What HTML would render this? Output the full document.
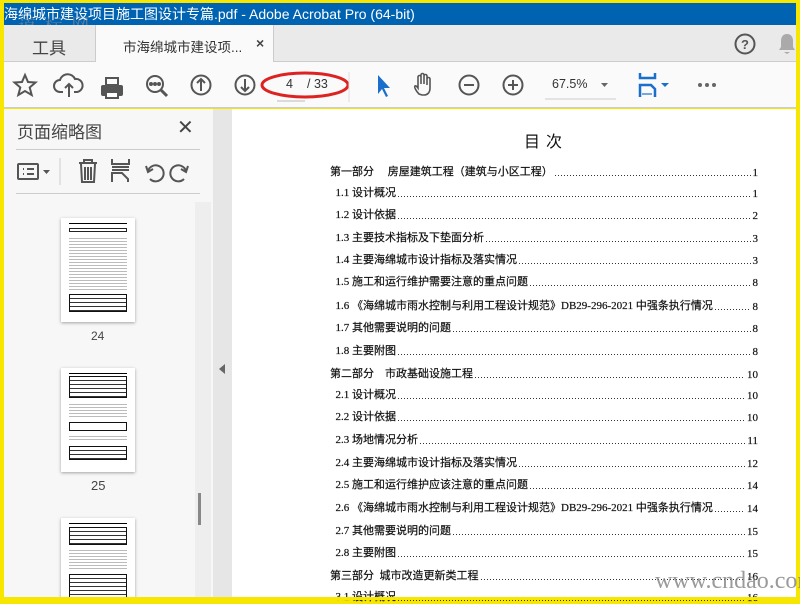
<!DOCTYPE html>
<html><head><meta charset="utf-8"><style>
*{margin:0;padding:0;box-sizing:border-box}
body{width:800px;height:600px;overflow:hidden;background:#f7e600;position:relative;font-family:"Liberation Sans","Noto Sans CJK SC",sans-serif}
.a{position:absolute}
.title{left:4px;top:3px;width:792px;height:22px;background:#0063b1;color:#fff;font-size:14px;line-height:22px;white-space:nowrap;overflow:hidden;padding-left:0}
.tabs{left:4px;top:25px;width:792px;height:37px;background:#eaeaea;border-bottom:1px solid #ccc}
.tb{left:4px;top:62px;width:792px;height:46px;background:#fafafa;border-bottom:1px solid #ccc}
.side{left:4px;top:109px;width:209px;height:488px;background:#f7f7f7;overflow:hidden}
.strip{left:213px;top:109px;width:19px;height:488px;background:#e6e6e6}
.pg{left:232px;top:109px;width:564px;height:488px;background:#fff}
.toc{font-family:"Liberation Serif","Noto Sans CJK SC",sans-serif;font-size:11px;color:#111;-webkit-text-stroke:0.2px #111}
.row{position:absolute;left:0;width:428px;height:15px;display:flex;align-items:flex-end;white-space:nowrap}
.row .d{flex:1;height:1px;background:repeating-linear-gradient(90deg,#333 0 1px,transparent 1px 3px);margin:0 2px 3px 2px}
.thumb{position:absolute;left:57px;width:74px;height:104px;background:#fff;box-shadow:0 1px 3px rgba(0,0,0,.35)}
.ln{position:absolute;height:1px;background:#555}
</style></head><body>
<div class="a title">海绵城市建设项目施工图设计专篇.pdf - Adobe Acrobat Pro (64-bit)</div>
<div class="a" style="left:18px;top:12px;color:rgba(150,150,150,.6);font-size:18px;font-family:'Noto Serif CJK SC',serif;letter-spacing:2px">道 标 网</div>
<div class="a tabs"></div>
<div class="a" style="left:32px;top:34px;font-size:17px;color:#444">工具</div>
<div class="a" style="left:95px;top:25px;width:179px;height:38px;background:#fafafa;border-left:1px solid #ccc;border-right:1px solid #ccc"></div>
<div class="a" style="left:123px;top:36px;font-size:13.5px;color:#333">市海绵城市建设项...</div>
<div class="a" style="left:256px;top:35px;font-size:14px;color:#444;font-weight:bold">×</div>
<svg class="a" style="left:734px;top:33px" width="22" height="22"><circle cx="11" cy="11" r="9.5" fill="none" stroke="#555" stroke-width="2"/><text x="11" y="16" font-size="13" font-weight="bold" text-anchor="middle" fill="#555" font-family="Liberation Sans">?</text></svg>
<svg class="a" style="left:777px;top:32px" width="20" height="24"><path d="M10 2c-4 0-6 3-6 7v6l-2 3h16l-2-3v-6c0-4-2-7-6-7z M7 20h6l-3 2z" fill="#aaa"/></svg>
<div class="a tb"></div>
<svg class="a" style="left:0;top:62px" width="800" height="46" fill="none" stroke="#555" stroke-width="2">
<path d="M25 13l3 7 7.5.5-5.8 5 2 7.5-6.7-4-6.7 4 2-7.5-5.8-5 7.5-.5z"/>
<path d="M63 30h-3a6 6 0 0 1 0-12 8 8 0 0 1 15-1 6 6 0 0 1 2 13h-3M69 35V22m-4 4l4-4 4 4"/>
<rect x="102" y="24" width="20" height="9" rx="1" fill="#555"/><rect x="106" y="16" width="12" height="7" fill="none"/><rect x="106" y="30" width="12" height="6" fill="#fff"/>
<circle cx="155" cy="22" r="8"/><path d="M161 28l6 6" stroke-width="3"/><circle cx="151" cy="22" r="1" fill="#555"/><circle cx="155" cy="22" r="1" fill="#555"/><circle cx="159" cy="22" r="1" fill="#555"/>
<circle cx="201" cy="23" r="9.5"/><path d="M201 29V17m-4 4l4-4 4 4"/>
<circle cx="245" cy="23" r="9.5"/><path d="M245 17v12m-4-4l4 4 4-4"/>
<ellipse cx="305" cy="23" rx="43" ry="12" stroke="#d22" stroke-width="3"/>
<path d="M378 13v19l4-5 4 8 2-1-4-8h6z" fill="#1a6fcc" stroke="none"/>
<path d="M419 32c-3-3-5-7-4-8s3 2 3 2V15a1.5 1.5 0 0 1 3 0v7V13a1.5 1.5 0 0 1 3 0v9V14a1.5 1.5 0 0 1 3 0v9v-6a1.5 1.5 0 0 1 3 0v9c0 5-3 7-6 7h-2z" stroke-width="1.6"/>
<circle cx="469" cy="23" r="9.5"/><path d="M464 23h10"/>
<circle cx="513" cy="23" r="9.5"/><path d="M508 23h10M513 18v10"/>
<path d="M545 37h71" stroke="#ccc" stroke-width="1"/>
<path d="M601 21h7l-3.5 4z" fill="#666" stroke="none"/>
<path d="M640 11v5h15v-5M640 35V23h11l4 4v8" stroke="#1a6fcc" stroke-width="2.5"/><path d="M642 32h10" stroke="#1a6fcc" stroke-width="1.2"/>
<path d="M661 21h8l-4 4z" fill="#1a6fcc" stroke="none"/>
<circle cx="700" cy="23" r="2" fill="#666" stroke="none"/><circle cx="707" cy="23" r="2" fill="#666" stroke="none"/><circle cx="714" cy="23" r="2" fill="#666" stroke="none"/>
<path d="M349 10v30" stroke="#ddd" stroke-width="1"/>
<path d="M277 39h28" stroke="#bbb" stroke-width="1"/>
</svg>
<div class="a" style="left:286px;top:77px;font-size:12.5px;color:#333">4</div>
<div class="a" style="left:307px;top:77px;font-size:12.5px;color:#333">/ 33</div>
<div class="a" style="left:552px;top:77px;font-size:12.5px;color:#333">67.5%</div>
<div class="a side">
<div class="thumb" style="top:109px"><div class="ln" style="left:8px;top:5px;width:58px;background:#000"></div><div class="ln" style="left:8px;top:10px;width:58px;height:4px;background:none;border:1px solid #222"></div>
<div style="position:absolute;left:8px;top:18px;width:58px;height:55px;background:repeating-linear-gradient(#fff 0 2px,#bbb 2px 3px)"></div>
<div style="position:absolute;left:8px;top:76px;width:58px;height:18px;border:1px solid #111;background:repeating-linear-gradient(#fff 0 3px,#333 3px 4px)"></div></div>
<div class="thumb" style="top:259px"><div class="ln" style="left:8px;top:5px;width:58px;background:#000"></div>
<div style="position:absolute;left:8px;top:8px;width:58px;height:22px;border:1px solid #111;background:repeating-linear-gradient(#fff 0 3px,#333 3px 4px)"></div>
<div style="position:absolute;left:8px;top:34px;width:58px;height:16px;background:repeating-linear-gradient(#fff 0 2px,#bbb 2px 3px)"></div>
<div style="position:absolute;left:8px;top:54px;width:58px;height:9px;border:1px solid #111"></div>
<div style="position:absolute;left:8px;top:66px;width:58px;height:8px;background:repeating-linear-gradient(#fff 0 2px,#bbb 2px 3px)"></div>
<div style="position:absolute;left:8px;top:78px;width:58px;height:14px;border:1px solid #111;background:repeating-linear-gradient(#fff 0 3px,#333 3px 4px)"></div></div>
<div class="thumb" style="top:409px"><div class="ln" style="left:8px;top:5px;width:58px;background:#000"></div>
<div style="position:absolute;left:8px;top:9px;width:58px;height:18px;border:1px solid #111;background:repeating-linear-gradient(#fff 0 3px,#333 3px 4px)"></div>
<div style="position:absolute;left:8px;top:30px;width:58px;height:22px;background:repeating-linear-gradient(#fff 0 2px,#bbb 2px 3px)"></div>
<div style="position:absolute;left:8px;top:56px;width:58px;height:24px;border:1px solid #111;background:repeating-linear-gradient(#fff 0 3px,#333 3px 4px)"></div></div>
</div>
<div class="a" style="left:17px;top:118px;font-size:17px;color:#444">页面缩略图</div>
<div class="a" style="left:177px;top:115px;font-size:20px;color:#444">✕</div>
<div class="a" style="left:16px;top:149px;width:184px;height:1px;background:#ccc"></div>
<div class="a" style="left:16px;top:193px;width:184px;height:1px;background:#ccc"></div>
<svg class="a" style="left:0;top:150px" width="213" height="44" fill="none" stroke="#555" stroke-width="2">
<rect x="18" y="14" width="20" height="15" rx="1"/><path d="M23 19h1M23 24h1M27 19h7M27 24h7"/><path d="M43 20h7l-3.5 4z" fill="#555" stroke="none"/>
<path d="M60 8v27" stroke="#ccc" stroke-width="1"/>
<path d="M79 13h18M84 13v-3h8v3M81 14l1 18h12l1-18M85 17v13M88 17v13M91 17v13"/>
<path d="M112 9v5h17v-5M112 17h17M112 20h17M112 32v-9h10l6 6v3"/>
<path d="M150 29a8 8 0 1 0-2-8M146 16l2 6 5-3"/>
<path d="M184 29a8 8 0 1 1 2-8M188 16l-2 6-5-3"/>
</svg>
<div class="a" style="left:195px;top:202px;width:16px;height:395px;background:#eee"></div>
<div class="a" style="left:198px;top:493px;width:3px;height:32px;background:#888"></div>
<div class="a" style="left:91px;top:329px;font-size:12px;color:#444">24</div>
<div class="a" style="left:91px;top:478px;font-size:13px;color:#444">25</div>
<div class="a strip"></div>
<div class="a" style="left:219px;top:364px;width:0;height:0;border-top:5px solid transparent;border-bottom:5px solid transparent;border-right:6px solid #666"></div>
<div class="a pg"></div>
<div class="a" style="left:524px;top:128px;font-size:16px;color:#111;letter-spacing:6px;font-family:'Noto Sans CJK SC',sans-serif">目次</div>
<div class="a toc" style="left:330px;top:0">
<div class="row" style="top:164px">第一部分&nbsp;&nbsp;&nbsp;&nbsp;&nbsp;房屋建筑工程（建筑与小区工程）<span class="d"></span>1</div>
<div class="row" style="top:185px">&nbsp;&nbsp;1.1 设计概况<span class="d"></span>1</div>
<div class="row" style="top:207px">&nbsp;&nbsp;1.2 设计依据<span class="d"></span>2</div>
<div class="row" style="top:230px">&nbsp;&nbsp;1.3 主要技术指标及下垫面分析<span class="d"></span>3</div>
<div class="row" style="top:252px">&nbsp;&nbsp;1.4 主要海绵城市设计指标及落实情况<span class="d"></span>3</div>
<div class="row" style="top:274px">&nbsp;&nbsp;1.5 施工和运行维护需要注意的重点问题<span class="d"></span>8</div>
<div class="row" style="top:298px">&nbsp;&nbsp;1.6 《海绵城市雨水控制与利用工程设计规范》DB29-296-2021 中强条执行情况<span class="d"></span>8</div>
<div class="row" style="top:320px">&nbsp;&nbsp;1.7 其他需要说明的问题<span class="d"></span>8</div>
<div class="row" style="top:343px">&nbsp;&nbsp;1.8 主要附图<span class="d"></span>8</div>
<div class="row" style="top:366px">第二部分&nbsp;&nbsp;&nbsp;&nbsp;市政基础设施工程<span class="d"></span>10</div>
<div class="row" style="top:387px">&nbsp;&nbsp;2.1 设计概况<span class="d"></span>10</div>
<div class="row" style="top:409px">&nbsp;&nbsp;2.2 设计依据<span class="d"></span>10</div>
<div class="row" style="top:432px">&nbsp;&nbsp;2.3 场地情况分析<span class="d"></span>11</div>
<div class="row" style="top:455px">&nbsp;&nbsp;2.4 主要海绵城市设计指标及落实情况<span class="d"></span>12</div>
<div class="row" style="top:477px">&nbsp;&nbsp;2.5 施工和运行维护应该注意的重点问题<span class="d"></span>14</div>
<div class="row" style="top:500px">&nbsp;&nbsp;2.6 《海绵城市雨水控制与利用工程设计规范》DB29-296-2021 中强条执行情况<span class="d"></span>14</div>
<div class="row" style="top:523px">&nbsp;&nbsp;2.7 其他需要说明的问题<span class="d"></span>15</div>
<div class="row" style="top:545px">&nbsp;&nbsp;2.8 主要附图<span class="d"></span>15</div>
<div class="row" style="top:568px">第三部分&nbsp;&nbsp;城市改造更新类工程<span class="d"></span>16</div>
<div class="row" style="top:589px">&nbsp;&nbsp;3.1 设计概况<span class="d"></span>16</div>
</div>
<div class="a" style="left:655px;top:568px;font-size:24px;color:rgba(120,120,120,.75);font-family:'Liberation Serif',serif">www.cndao.com</div>
<div class="a" style="left:0;top:597px;width:800px;height:3px;background:#f7e600"></div>
</body></html>
